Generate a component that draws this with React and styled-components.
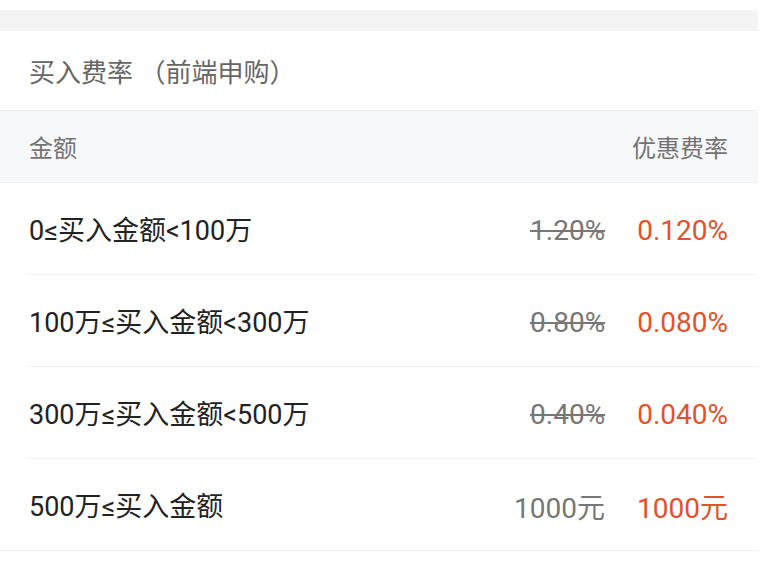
import styled, { createGlobalStyle } from "styled-components";

const GlobalStyle = createGlobalStyle`
  body {
    margin: 0;
    background: #ffffff;
    font-family: Roboto, "Noto Sans CJK SC", sans-serif;
  }
`;

const Page = styled.div`
  width: 758px;
  padding-top: 10px;
`;

const Spacer = styled.div`
  height: 21px;
  background-color: #f4f4f4;
`;

const Title = styled.div`
  height: 79px;
  display: flex;
  align-items: center;
  padding: 0 29px;
  font-size: 26px;
  color: #666666;
  border-bottom: 1px solid #eeeeee;
`;

const HeadRow = styled.div`
  height: 71px;
  display: flex;
  align-items: center;
  justify-content: space-between;
  padding: 0 30px 0 29px;
  background-color: #f7f8fa;
  border-bottom: 1px solid #f0f0f0;
  font-size: 24px;
  color: #737373;
`;

const Row = styled.div`
  height: 91px;
  display: flex;
  align-items: center;
  justify-content: space-between;
  padding-right: 30px;
  margin-left: ${(p) => (p.$last ? "0" : "29px")};
  padding-left: ${(p) => (p.$last ? "29px" : "0")};
  border-bottom: 1px solid #f0f0f0;
`;

const Label = styled.span`
  font-size: 27px;
  color: #222222;
`;

const Prices = styled.div`
  display: flex;
  align-items: center;
  gap: 32px;
  padding-top: 3px;
`;

const OldPrice = styled.span`
  font-size: 28px;
  color: #777777;
  text-decoration: ${(p) => (p.$strike ? "line-through" : "none")};
  text-decoration-thickness: 2px;
`;

const NewPrice = styled.span`
  min-width: 89px;
  text-align: right;
  font-size: 28px;
  color: #e2522a;
`;

const rates = [
  { range: "0≤买入金额<100万", old: "1.20%", now: "0.120%", strike: true },
  { range: "100万≤买入金额<300万", old: "0.80%", now: "0.080%", strike: true },
  { range: "300万≤买入金额<500万", old: "0.40%", now: "0.040%", strike: true },
  { range: "500万≤买入金额", old: "1000元", now: "1000元", strike: false },
];

export default function App() {
  return (
    <>
      <GlobalStyle />
      <Page>
        <Spacer />
        <Title>买入费率 （前端申购）</Title>
        <HeadRow>
          <span>金额</span>
          <span>优惠费率</span>
        </HeadRow>
        {rates.map((r, i) => (
          <Row key={r.range} $last={i === rates.length - 1}>
            <Label>{r.range}</Label>
            <Prices>
              <OldPrice $strike={r.strike}>{r.old}</OldPrice>
              <NewPrice>{r.now}</NewPrice>
            </Prices>
          </Row>
        ))}
      </Page>
    </>
  );
}
